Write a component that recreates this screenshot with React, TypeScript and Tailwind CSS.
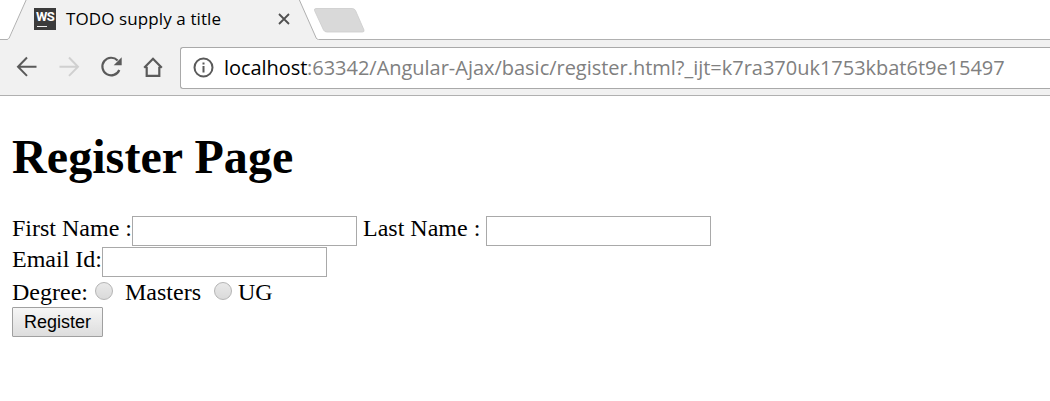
function TabStrip() {
  return (
    <div className="relative h-10 shrink-0 bg-white">
      <svg className="absolute inset-0" width="1050" height="40" viewBox="0 0 1050 40" fill="none">
        <path d="M9 40 L27 -2 H298.500 L317 40 Z" fill="#f1f1f1" />
        <path d="M0 39.500 H7 Q8.500 39.500 9.200 38 L27 -2" stroke="#b0b0b0" />
        <path d="M298.500 -2 L316.200 38 Q317 39.500 318.500 39.500 H1050" stroke="#b0b0b0" />
        <path d="M316 8.500 H352 Q354.500 8.500 355.500 10.500 L364 30 Q364.500 32 362.500 32 H327 Q324.500 32 323.500 30 L314.500 10.500 Q314 8.500 316 8.500 Z" fill="#d9d9d9" stroke="#cbcbcb" strokeWidth=".8" />
      </svg>
      <div className="relative flex h-10 w-[300px] items-center pl-[34px]">
        <div className="relative mb-[2px] flex h-[22px] w-[22px] shrink-0 justify-center bg-[#3b3b3b] pt-px font-['Roboto',sans-serif] text-[13px] leading-[15px] font-bold tracking-[-0.7px] text-white">
          WS
          <span className="absolute bottom-[3px] left-[3px] h-[1px] w-[10px] bg-[#eeeeee]" />
        </div>
        <span className="mb-[2px] ml-[10px] w-[212px] whitespace-nowrap font-['Open_Sans',sans-serif] text-[17px] tracking-[0.1px] text-black">TODO supply a title</span>
        <svg className="mb-[2px] shrink-0" width="12" height="12" viewBox="0 0 12 12" fill="none" stroke="#505050" strokeWidth="1.8">
          <path d="M1 1 L11 11 M11 1 L1 11" />
        </svg>
      </div>
    </div>
  );
}

function Toolbar() {
  return (
    <div className="flex h-14 shrink-0 items-center border-b border-[#b0b0b0] bg-[#f1f1f1]">
      <svg className="shrink-0" width="180" height="55" viewBox="0 40 180 55" fill="none" stroke="#5a5a5a" strokeWidth="2">
        <path d="M36.500 66.700 H18.500 M27 57.500 L18 66.700 L27 75.900" />
        <path d="M59.500 66.700 H77.500 M69 57.500 L78 66.700 L69 75.900" stroke="#d0d0d0" />
        <path d="M117.600 60.500 A8.800 8.800 0 1 0 119.300 70" strokeWidth="2.200" />
        <path d="M121.700 57.300 V65.300 H113.700 Z" fill="#5a5a5a" stroke="none" />
        <path d="M144.200 67.700 L153 58.700 L161.800 67.700 M146.700 66.700 V75.800 H159.300 V66.700" strokeWidth="2.200" />
      </svg>
      <div className="flex h-[42px] min-w-0 flex-1 items-center rounded-l-[3px] border border-r-0 border-[#a9a9a9] bg-white pl-[12px]">
        <svg className="shrink-0" width="21" height="21" viewBox="0 0 21 21" fill="none" stroke="#5a5a5a" strokeWidth="2">
          <circle cx="10.500" cy="10.500" r="9" />
          <path d="M10.500 9 V15.500 M10.500 5.500 V7.500" />
        </svg>
        <div className="ml-[10px] flex whitespace-nowrap font-['Open_Sans',sans-serif] text-[20px] leading-[28px] text-[#808080]">
          <span className="w-[83px] tracking-[-0.05px] text-black">localhost</span>
          <span className="tracking-[-0.02px]">:63342/Angular-Ajax/basic/register.html?_ijt=k7ra370uk1753kbat6t9e15497</span>
        </div>
      </div>
    </div>
  );
}

const inputClass = "h-[30px] w-[225px] shrink-0 border border-[#a9a9a9] bg-white outline-none";
const radioClass = "mb-[2px] h-[18px] w-[18px] shrink-0 appearance-none rounded-full border border-[#b4b4b4] bg-linear-to-b from-[#e9e9e9] to-[#dadada]";

export default function App() {
  return (
    <div className="flex h-[401px] w-full flex-col overflow-hidden bg-white">
      <TabStrip />
      <Toolbar />
      <main className="pt-[33px] pl-[12px] font-['Liberation_Serif',serif] text-[24px] leading-[24px] whitespace-nowrap text-black">
        <h1 className="h-[87px] text-[48px] leading-[56px] font-bold tracking-[0.08px]">Register Page</h1>
        <form>
          <div className="flex h-[31px] items-start">
            <label className="w-[120px]" htmlFor="first">First Name :</label>
            <input id="first" className={inputClass} />
            <label className="ml-[6px] w-[123px]" htmlFor="last">Last Name :</label>
            <input id="last" className={inputClass} />
          </div>
          <div className="flex h-[30px] items-start">
            <label className="w-[90px]" htmlFor="email">Email Id:</label>
            <input id="email" className={inputClass} />
          </div>
          <div className="flex h-[30px] items-center">
            <span className="w-[83px]">Degree:</span>
            <input id="masters" name="degree" type="radio" className={radioClass} />
            <label className="ml-[12px] w-[89px]" htmlFor="masters">Masters</label>
            <input id="ug" name="degree" type="radio" className={radioClass} />
            <label className="ml-[6px]" htmlFor="ug">UG</label>
          </div>
          <button type="button" className="block h-[30px] w-[91px] rounded-[1px] border border-[#a0a0a0] bg-linear-to-b from-[#f6f6f6] to-[#dddddd] font-['Liberation_Sans',sans-serif] text-[18px] leading-[26px]">Register</button>
        </form>
      </main>
    </div>
  );
}
